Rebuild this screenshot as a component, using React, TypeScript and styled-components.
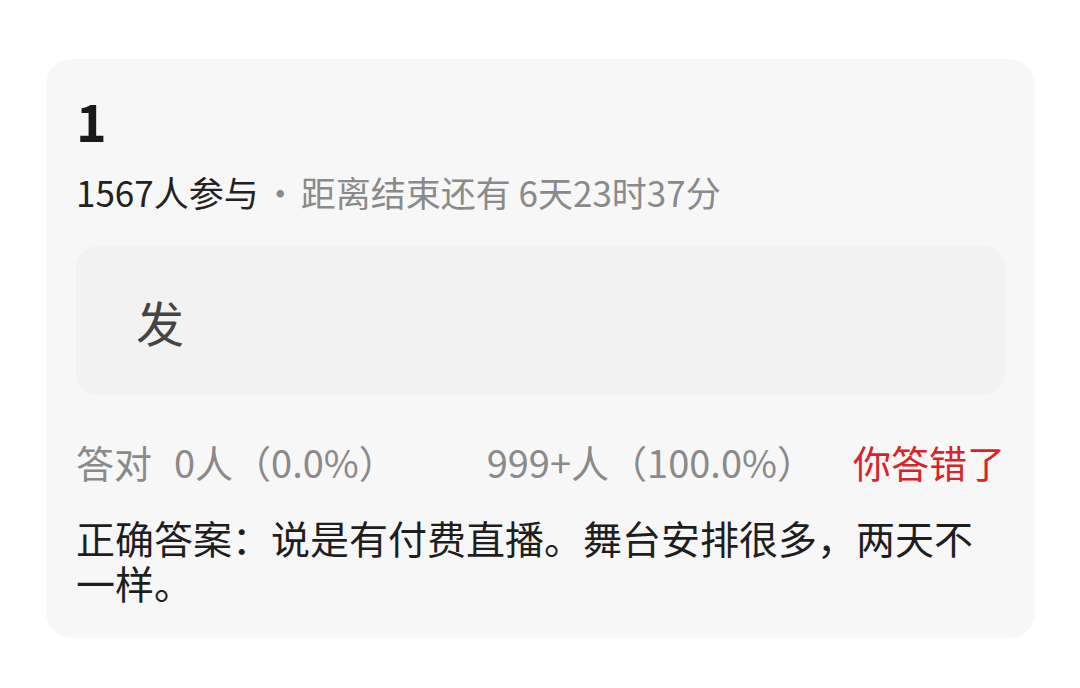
import styled, { createGlobalStyle } from 'styled-components';

const GlobalStyle = createGlobalStyle`
  html, body {
    margin: 0;
    padding: 0;
    background: #fff;
  }
  body {
    font-family: "Noto Sans CJK SC", "Noto Sans", sans-serif;
    -webkit-font-smoothing: antialiased;
  }
`;

const quiz = {
  title: '1',
  participants: 1567,
  remaining: '6天23时37分',
  option: '发',
  correctCount: '0人（0.0%）',
  wrongCount: '999+人（100.0%）',
  result: '你答错了',
  answer: '说是有付费直播。舞台安排很多，两天不一样。',
};

const App = () => {
  return (
    <>
      <GlobalStyle />
      <Page>
        <Card>
          <Title>{quiz.title}</Title>
          <Meta>
            <span className="meta_count">{quiz.participants}人参与</span>
            <span className="meta_dot">·</span>
            <span className="meta_time">距离结束还有 {quiz.remaining}</span>
          </Meta>
          <OptionBox>
            <OptionText>{quiz.option}</OptionText>
          </OptionBox>
          <StatsRow>
            <StatGroup>
              <span>答对</span>
              <span>{quiz.correctCount}</span>
            </StatGroup>
            <StatGroup $push>
              <span>{quiz.wrongCount}</span>
            </StatGroup>
            <Result $wrong>{quiz.result}</Result>
          </StatsRow>
          <Answer>{`正确答案：${quiz.answer}`}</Answer>
        </Card>
      </Page>
    </>
  );
};

export default App;

const Page = styled.div`
  padding: 59px 45px 40px 46px;
`;

const Card = styled.div`
  background: #f7f7f7;
  border-radius: 26px;
  padding: 30px 30px 33px 30px;
  display: flex;
  flex-direction: column;
`;

const Title = styled.div`
  font-size: 52px;
  line-height: 62px;
  font-weight: 700;
  color: #1a1a1a;
`;

const Meta = styled.div`
  margin-top: 18px;
  font-size: 35px;
  line-height: 46px;
  display: flex;
  align-items: baseline;
  white-space: nowrap;

  .meta_count {
    color: #222;
  }

  .meta_dot {
    color: #8a8a8a;
    margin: 0 3px 0 4px;
  }

  .meta_time {
    color: #8a8a8a;
  }
`;

const OptionBox = styled.div`
  margin-top: 31px;
  height: 149px;
  background: #f2f2f2;
  border-radius: 22px;
  display: flex;
  align-items: center;
  padding-left: 60px;
`;

const OptionText = styled.span`
  font-size: 48px;
  color: #444;
`;

const StatsRow = styled.div`
  margin-top: 44px;
  display: flex;
  align-items: baseline;
  font-size: 38px;
  line-height: 46px;
  white-space: nowrap;
`;

const StatGroup = styled.div<{ $push?: boolean }>`
  display: flex;
  gap: 22px;
  color: #8a8a8a;
  margin-left: ${({ $push }) => ($push ? 'auto' : '0')};
`;

const Result = styled.div<{ $wrong?: boolean }>`
  margin-left: 38px;
  color: ${({ $wrong }) => ($wrong ? '#d8232a' : '#2a9d4b')};
`;

const Answer = styled.div`
  margin-top: 30px;
  font-size: 39px;
  line-height: 45px;
  color: #1e1e1e;
`;
